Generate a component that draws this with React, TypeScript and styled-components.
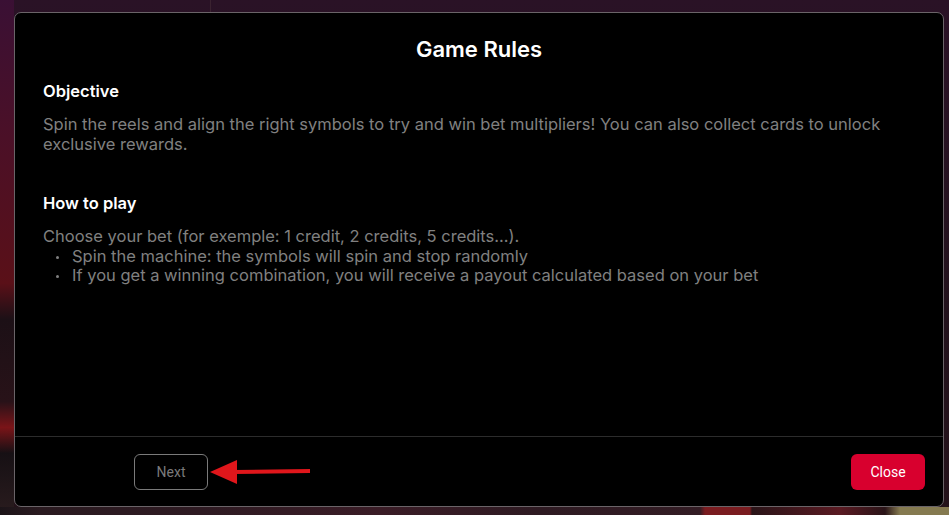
import React from "react";
import styled, { createGlobalStyle } from "styled-components";

const Global = createGlobalStyle`
  html, body { margin: 0; padding: 0; }
  body { width: 949px; height: 515px; overflow: hidden; background: #1a1016; }
  #root { width: 949px; height: 515px; }
  * { box-sizing: border-box; }
`;

const Backdrop = styled.div`
  width: 949px;
  height: 515px;
  padding: 12px 5px 8px 14px;
  position: relative;
  background:
    linear-gradient(90deg, rgba(0,0,0,0) 0px, rgba(0,0,0,0) 210px, #3a2230 210px, #3a2230 211px, rgba(0,0,0,0) 211px) top / 100% 12px no-repeat,
    linear-gradient(180deg, #3a1034 0%, #4a1028 25%, #5a1018 55%, #1c1016 62%, #281218 78%, #7a1418 83%, #161014 88%, #2a1c1e 100%) left / 14px 100% no-repeat,
    linear-gradient(180deg, #2a1226 0%, #22121c 60%, #24121a 100%),
    #1a1016;
`;

const BottomTiles = styled.div`
  position: absolute;
  left: 0;
  right: 0;
  bottom: 0;
  height: 8px;
  background: linear-gradient(90deg, #1c1418 0px, #2a1a20 40px, #2e1a22 200px, #3a1c26 380px, #2e1a22 540px, #331c24 700px, #7a1c20 705px, #7a1c20 750px, #2a1418 752px, #5a1a22 840px, #2a1418 885px, #857a50 900px, #857a50 949px);
`;

const Modal = styled.div`
  position: relative;
  z-index: 1;
  width: 930px;
  height: 495px;
  background: #000;
  border: 1px solid #6a6468;
  border-radius: 7px;
  display: flex;
  flex-direction: column;
  font-family: Inter, "Noto Sans", sans-serif;
`;

const Header = styled.div`
  padding: 22px 28px 18px;
  display: flex;
  justify-content: center;
`;

const Title = styled.h2`
  margin: 0;
  font-size: 22px;
  line-height: 28px;
  font-weight: 600;
  color: #fff;
`;

const Content = styled.div`
  flex: 1;
  padding: 0 28px;
  display: flex;
  flex-direction: column;
  gap: 39px;
`;

const Section = styled.section`
  display: flex;
  flex-direction: column;
  gap: 14px;
`;

const Heading = styled.h3`
  margin: 0;
  font-size: 16.5px;
  line-height: 20px;
  font-weight: 600;
  color: #fff;
`;

const Text = styled.p`
  margin: 0;
  font-size: 16.5px;
  line-height: 19.5px;
  color: #808080;
`;

const List = styled.ul`
  margin: 0;
  padding: 0 0 0 29px;
  list-style: none;
`;

const Item = styled.li`
  position: relative;
  font-size: 16.5px;
  line-height: 19.5px;
  color: #808080;
  &::before {
    content: "";
    position: absolute;
    left: -16px;
    top: 9px;
    width: 3px;
    height: 3px;
    border-radius: 50%;
    background: #808080;
  }
`;

const Footer = styled.div`
  height: 70px;
  border-top: 1px solid #2c2c2c;
  display: flex;
  align-items: center;
  justify-content: space-between;
  padding: 0 18px 0 119px;
`;

const Left = styled.div`
  display: flex;
  align-items: center;
  gap: 2px;
`;

const Button = styled.button<{ $primary?: boolean }>`
  height: 36px;
  width: 74px;
  border-radius: 6px;
  font-family: Roboto, "Liberation Sans", Arial, sans-serif;
  font-size: 14px;
  cursor: pointer;
  ${(p) =>
    p.$primary
      ? `background: #d8002e; color: #fff; border: none;`
      : `background: transparent; color: #7a7a7a; border: 1.5px solid #7a7a7a;`}
`;

const Arrow = () => (
  <svg width="100" height="30" viewBox="0 0 100 30">
    <path d="M24 13 L100 12 L100 16 L24 17 Z" fill="#e0161b" />
    <path d="M0 15 L27 3 L27 27 Z" fill="#e0161b" />
  </svg>
);

export default function App() {
  return (
    <>
      <Global />
      <Backdrop>
        <Modal>
          <Header>
            <Title>Game Rules</Title>
          </Header>
          <Content>
            <Section>
              <Heading>Objective</Heading>
              <Text>
                Spin the reels and align the right symbols to try and win bet multipliers! You can also collect cards to unlock
                exclusive rewards.
              </Text>
            </Section>
            <Section>
              <Heading>How to play</Heading>
              <div>
                <Text>Choose your bet (for exemple: 1 credit, 2 credits, 5 credits...).</Text>
                <List>
                  <Item>Spin the machine: the symbols will spin and stop randomly</Item>
                  <Item>If you get a winning combination, you will receive a payout calculated based on your bet</Item>
                </List>
              </div>
            </Section>
          </Content>
          <Footer>
            <Left>
              <Button>Next</Button>
              <Arrow />
            </Left>
            <Button $primary>Close</Button>
          </Footer>
        </Modal>
        <BottomTiles />
      </Backdrop>
    </>
  );
}
